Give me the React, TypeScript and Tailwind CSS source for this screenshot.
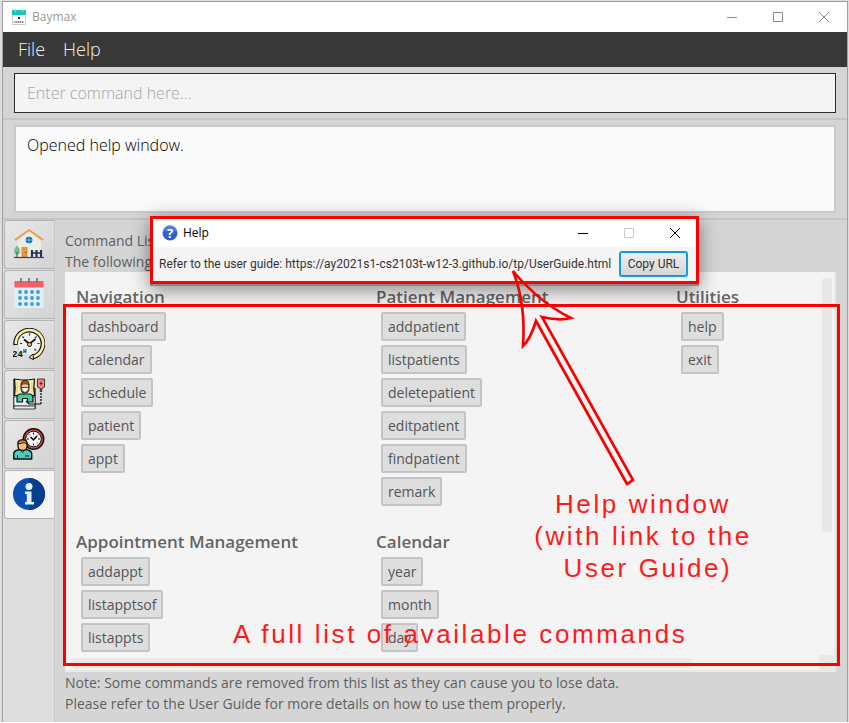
import type { ReactNode } from "react";

type Group = { title: string; commands: string[] };

const GROUPS: Group[] = [
  { title: "Navigation", commands: ["dashboard", "calendar", "schedule", "patient", "appt"] },
  {
    title: "Patient Management",
    commands: ["addpatient", "listpatients", "deletepatient", "editpatient", "findpatient", "remark"],
  },
  { title: "Utilities", commands: ["help", "exit"] },
  { title: "Appointment Management", commands: ["addappt", "listapptsof", "listappts"] },
  { title: "Calendar", commands: ["year", "month", "day"] },
];

function AppIcon() {
  return (
    <svg width="14" height="16" viewBox="0 0 14 16" aria-hidden="true">
      <rect x="0.5" y="2" width="13" height="13.5" fill="#fff" stroke="#ccc" />
      <path d="M0 1h14v5H0z" fill="#14c4b4" />
      <path d="M3.500 0v3M10.500 0v3" stroke="#8de4dc" strokeWidth="1.500" />
      <path d="M6 8h2v2H6z" fill="#333" />
      <path d="M2 13h10" stroke="#222" strokeWidth="1.200" strokeDasharray="1.500 0.500" />
    </svg>
  );
}

function HomeIcon() {
  return (
    <svg width="32" height="32" viewBox="0 0 32 32" aria-hidden="true">
      <path d="M5 13 16 3.500 28 13v16H5z" fill="#ebebe8" />
      <path d="M2 12 16 2l14 10" fill="none" stroke="#f09a3e" strokeWidth="1.800" />
      <circle cx="16" cy="12" r="3.300" fill="#1b5f8c" />
      <path d="M16 8.700v6.600M12.700 12h6.600" stroke="#35b5f0" strokeWidth="1.300" />
      <path d="M4 17.500c2.600 2.500 3.400 5 2.600 7.500-.8 2-4.400 2-5.200 0C.7 22.500 1.600 19.600 4 17.500z" fill="#6cc083" />
      <path d="M4 24v5" stroke="#3c7a52" strokeWidth="1.200" />
      <path d="M8.500 19h6v10h-6z" fill="#e8943c" />
      <circle cx="13" cy="24.500" r="0.700" fill="#7a4a10" />
      <path d="M19 22v7M23.500 22v7M28 22v7" stroke="#2b3358" strokeWidth="2.200" />
      <path d="M18 25h11" stroke="#2b3358" strokeWidth="1.600" />
      <path d="M1 29.500h30" stroke="#3b4269" strokeWidth="1.200" />
    </svg>
  );
}

function CalendarIcon() {
  const columns = [7, 13, 19, 25];
  const rows = [14, 20, 26];
  return (
    <svg width="32" height="32" viewBox="0 0 32 32" aria-hidden="true">
      <path d="M1.500 8h29v22h-29z" fill="#dff0f8" />
      <path d="M1.500 3h29v6.500h-29z" fill="#f95f5c" />
      <path d="M8 0v5M16 0v5M24 0v5" stroke="#757b85" strokeWidth="1.800" />
      {rows.map((y) => columns.map((x) => <circle key={`${x}-${y}`} cx={x} cy={y} r="1.900" fill="#3b9be0" />))}
    </svg>
  );
}

function DayClockIcon() {
  return (
    <svg width="32" height="32" viewBox="0 0 32 32" aria-hidden="true">
      <circle cx="16.500" cy="15.500" r="11" fill="#f0f0ee" />
      <path d="M2.600 17a13.700 13.700 0 1 1 16 12.300" fill="none" stroke="#111" strokeWidth="4.600" />
      <path d="M2.800 16a13.700 13.700 0 1 1 16 13.200" fill="none" stroke="#f6efa6" strokeWidth="2.600" />
      <path d="m20 26-4 3.500 4.500 2z" fill="#f6efa6" stroke="#111" />
      <path d="M16.500 5.500v2M7 15.500h2M24.500 15.500h2M9.500 8.500l1.500 1.500M23.500 8.500 22 10M23 22.500l-1.500-1.500" stroke="#222" strokeWidth="1.100" />
      <path d="m11 11.500 5.500 4.500L22.500 11" fill="none" stroke="#111" strokeWidth="1.700" />
      <circle cx="16.500" cy="16.500" r="2" fill="#efb27c" stroke="#111" />
      <text x="-1" y="28.500" fontSize="9" fontWeight="700" fontFamily="Liberation Mono, monospace" fill="#111">24</text>
      <text x="10" y="25" fontSize="6" fontWeight="700" fontFamily="Liberation Mono, monospace" fill="#111">H</text>
    </svg>
  );
}

function PatientIcon() {
  return (
    <svg width="32" height="32" viewBox="0 0 32 32" aria-hidden="true" strokeLinejoin="round">
      <path d="M1 1v30M22 10v21" stroke="#111" strokeWidth="1.300" />
      <path d="M1 19h21v9H1z" fill="#e8edf6" stroke="#333" strokeWidth="0.600" />
      <path d="M1 28h21v3H1z" fill="#e4e9f2" stroke="#222" strokeWidth="0.800" />
      <path d="M1.500 1q10 2 20 0l-.7 9 .7 7.500h-20l.7-7.500z" fill="#f9efaa" stroke="#111" strokeWidth="1.200" />
      <path d="M4 4v10M19 4v10" stroke="#d9bf62" strokeWidth="0.800" />
      <path d="M8 8q0-5.500 4-5.500T16 8v2q0 5-4 5t-4-5z" fill="#f6bd92" stroke="#111" strokeWidth="1.100" />
      <path d="M8 6.500Q8.500 2.500 12 2.500t4 4q-4-1.500-8 0z" fill="#c5562a" stroke="#111" strokeWidth="0.600" />
      <path d="M8.300 9.500h7.400q0 4.500-3.700 5-3.700-.5-3.700-5z" fill="#f3f3f3" stroke="#111" strokeWidth="0.700" />
      <path d="M4 24v-4q0-4 4-4h8q4 0 4 4v4h-5.500v-3.500h-5V24z" fill="#3ed0ac" stroke="#111" strokeWidth="1.200" />
      <path d="M24.500 1h7v8L28 11l-3.500-2z" fill="#f58a78" stroke="#111" strokeWidth="0.800" />
      <path d="M28 3.500v4M26.500 5.500h3" stroke="#7a1515" />
      <path d="M28 11v3" stroke="#6a3030" strokeWidth="2.500" />
      <path d="M28 15v11" stroke="#111" strokeWidth="1.300" strokeDasharray="2 1" />
      <path d="M28 26H16l-3-3" fill="none" stroke="#111" strokeWidth="1.200" />
    </svg>
  );
}

function AppointmentIcon() {
  return (
    <svg width="32" height="32" viewBox="0 0 32 32" aria-hidden="true" strokeLinejoin="round">
      <circle cx="20.500" cy="11" r="10.200" fill="#e24c4c" stroke="#111" strokeWidth="1.500" />
      <circle cx="20.500" cy="11" r="7.800" fill="#f8f8f8" stroke="#111" />
      <path d="M20.500 4.500v2M20.500 15.500v2M14 11h2M25 11h2M16 6.500l1 1M25 6.500l-1 1M25 15.500l-1-1" stroke="#111" />
      <path d="m17.500 9 3 3 3.500-4" fill="none" stroke="#111" strokeWidth="1.600" />
      <path d="M0.700 31v-5q0-3 4-4l3-1h4l3 1q4 1 4 4v5z" fill="#45cfc4" stroke="#111" strokeWidth="1.400" />
      <path d="m7 21 2.500 4 2.500-4z" fill="#fff" stroke="#111" strokeWidth="0.800" />
      <path d="M5 15q0-3 4.500-3t4.500 3v3q0 4.500-4.500 4.500T5 18z" fill="#f8c07c" stroke="#111" strokeWidth="1.300" />
      <path d="M5 16q0-4 4.500-4t4.500 4q-3-2-5-1z" fill="#e08a34" stroke="#111" strokeWidth="0.900" />
      <path d="M12 28h4M4.500 27v4" stroke="#111" />
    </svg>
  );
}

function InfoIcon() {
  return (
    <svg width="32" height="32" viewBox="0 0 32 32" aria-hidden="true">
      <circle cx="16" cy="16" r="16" fill="#0b4fb3" />
      <path d="M16 0a16 16 0 0 1 0 32z" fill="#083f8a" />
      <circle cx="16" cy="8.500" r="3.500" fill="#e3f3fc" />
      <path d="M12 13.500h6.500V24H21v2.500h-9V24h1.800v-8H12z" fill="#e3f3fc" />
    </svg>
  );
}

const TABS: { label: string; icon: ReactNode }[] = [
  { label: "Dashboard", icon: <HomeIcon /> },
  { label: "Calendar", icon: <CalendarIcon /> },
  { label: "Schedule", icon: <DayClockIcon /> },
  { label: "Patients", icon: <PatientIcon /> },
  { label: "Appointments", icon: <AppointmentIcon /> },
  { label: "Information", icon: <InfoIcon /> },
];

function WindowButtons({ muted }: { muted: boolean }) {
  const dark = muted ? "#8c8c8c" : "#000";
  const box = muted ? "#8c8c8c" : "#c8c8c8";
  return (
    <div className="flex h-full items-center">
      <button aria-label="Minimize" className="flex h-full w-[46px] items-center justify-center">
        <svg width="10" height="10" viewBox="0 0 10 10"><path d="M0 5.500h10" stroke={dark} /></svg>
      </button>
      <button aria-label="Maximize" className="flex h-full w-[46px] items-center justify-center">
        <svg width="10" height="10" viewBox="0 0 10 10"><path d="M.5.5h9v9h-9z" fill="none" stroke={box} /></svg>
      </button>
      <button aria-label="Close" className="flex h-full w-[46px] items-center justify-center">
        <svg width="10" height="10" viewBox="0 0 10 10"><path d="m0 0 10 10M10 0 0 10" stroke={dark} /></svg>
      </button>
    </div>
  );
}

function CommandGroup({ title, commands }: Group) {
  return (
    <section>
      <h2 className="text-[17px] font-semibold leading-6 whitespace-nowrap text-[#646464]">{title}</h2>
      <ul className="mt-[3px] flex flex-col items-start gap-1 pl-[5px]">
        {commands.map((name) => (
          <li
            key={name}
            className="rounded-xs border-2 border-[#c4c4c4] bg-[#dedede] px-[5px] text-[14px] leading-[25px] text-[#555]"
          >
            {name}
          </li>
        ))}
      </ul>
    </section>
  );
}

function HelpDialog() {
  return (
    <div
      role="dialog"
      aria-label="Help"
      className="absolute top-[216px] left-[150px] w-[549px] border-b-2 border-[#888] shadow-[0_4px_18px_rgba(0,0,0,0.45)]"
    >
      <div className="border-[3px] border-[#fb0000] bg-[#f4f4f4]">
        <div className="flex h-7 items-center bg-white pl-[9px]">
          <svg width="16" height="16" viewBox="0 0 16 16" aria-hidden="true">
            <circle cx="8" cy="8" r="7.500" fill="#2f62cf" />
            <path d="M1 7a7 7 0 0 1 14 0q-7-3-14 0z" fill="#6d9bea" opacity="0.5" />
            <text x="8" y="12.500" textAnchor="middle" fontSize="13" fontWeight="700" fontFamily="Open Sans, sans-serif" fill="#fff">?</text>
          </svg>
          <span className="ml-[5px] flex-1 text-[12px] leading-[18px] text-black">Help</span>
          <div className="-mr-0.5 h-full">
            <WindowButtons muted={false} />
          </div>
        </div>
        <div className="flex h-[34px] items-center justify-between pr-2 pl-1.5 font-['Roboto','Open_Sans',sans-serif] text-[12px] text-[#333]">
          <span className="whitespace-nowrap">
            Refer to the user guide: https://ay2021s1-cs2103t-w12-3.github.io/tp/UserGuide.html
          </span>
          <button className="h-[26px] w-[69px] rounded-[3px] border-2 border-[#0f9fd3] bg-linear-to-b from-[#eeeeee] to-[#d6d6d6] whitespace-nowrap">
            Copy URL
          </button>
        </div>
      </div>
    </div>
  );
}

function Annotations() {
  return (
    <>
      <div className="pointer-events-none absolute top-[304px] left-[63px] h-[362px] w-[777px] border-[3px] border-[#fb0000]" />
      <svg
        className="pointer-events-none absolute top-[260px] left-[500px]"
        width="150"
        height="240"
        viewBox="500 260 150 240"
        aria-hidden="true"
      >
        <path
          d="M513 271Q540 303 571 318Q560 321 542 317L633 480L627 484L536 321Q530 340 523 346Q526 304 513 271Z"
          fill="none"
          stroke="#fb0000"
          strokeWidth="2.700"
        />
      </svg>
      <p className="pointer-events-none absolute top-[488px] left-[512px] w-[262px] text-center font-['Liberation_Sans',Arial,sans-serif] text-[26px] leading-8 tracking-widest text-[#ff1a1a]">
        Help window
        <br />
        (with link to the
        <br />
        &nbsp;User Guide)
      </p>
      <p className="pointer-events-none absolute top-[618px] left-[233px] font-['Liberation_Sans',Arial,sans-serif] text-[26px] leading-8 tracking-widest whitespace-nowrap text-[#ff1a1a]">
        A full list of available commands
      </p>
    </>
  );
}

export default function App() {
  return (
    <div className="relative flex min-h-screen w-full flex-col border-b border-white bg-[#dedede] pt-px pr-px pl-0.5 font-['Open_Sans','Noto_Sans',sans-serif]">
      <div className="flex flex-1 flex-col border border-b-0 border-[#a0a0a0] bg-[#d5d5d5]">
        <header className="flex h-[30px] items-center bg-white pl-[9px]">
          <AppIcon />
          <h1 className="ml-1.5 flex-1 text-[12px] text-[#999]">Baymax</h1>
          <WindowButtons muted />
        </header>
        <nav className="flex h-[35px] items-center gap-[18px] bg-[#383838] px-[15px] text-[18px] font-light text-[#f0f0f0]">
          <button>File</button>
          <button>Help</button>
        </nav>
        <div className="border-b-2 border-[#c5c5c5] px-[11px] pt-1.5 pb-[5px]">
          <input
            aria-label="Command"
            placeholder="Enter command here..."
            className="block h-10 w-full border border-[#2a2a2a] bg-[#f4f4f4] px-3 text-[16px] font-light outline-none placeholder:text-[#a5a5a5]"
          />
        </div>
        <div className="border-b-2 border-[#c5c5c5] px-[11px] py-[5px]">
          <textarea
            aria-label="Result"
            readOnly
            value="Opened help window."
            className="block h-[88px] w-full resize-none border-2 border-[#cacaca] bg-[#fafafa] px-[11px] py-1.5 text-[16px] leading-6 font-light text-black outline-none"
          />
        </div>
        <div className="flex flex-1">
          <div role="tablist" className="flex w-[52px] flex-col gap-px border-r border-[#c8c8c8] bg-[#dedede] pl-px">
            {TABS.map((tab, index) => (
              <button
                key={tab.label}
                role="tab"
                aria-label={tab.label}
                aria-selected={index === 5}
                className={`flex h-[49px] items-center justify-center rounded-l-[3px] border-y border-l border-[#b4b4b4] pr-px pb-px ${
                  index === 5 ? "bg-[#f4f4f4]" : "bg-linear-to-br from-[#e8e8e8] to-[#d3d3d3]"
                }`}
              >
                {tab.icon}
              </button>
            ))}
          </div>
          <main className="flex min-w-0 flex-1 flex-col pt-2.5 pr-[11px] pb-2 pl-2.5 text-[14px] leading-[21px] font-medium text-[#5f5f5f]">
            <p>Command List</p>
            <p>The following</p>
            <div className="flex flex-1 flex-col border-r-2 border-b-2 border-[#eaeaea] bg-[#f4f4f4]">
              <div className="flex flex-1">
                <div className="grid flex-1 grid-cols-[300px_300px_1fr] content-start gap-y-6 pt-[13px] pl-[11px] font-normal">
                  {GROUPS.map((group) => (
                    <CommandGroup key={group.title} {...group} />
                  ))}
                </div>
                <div className="w-[15px] pt-1.5 pl-[3px]">
                  <div className="h-[254px] w-2.5 rounded-[3px] bg-[#e8e8e8]" />
                </div>
              </div>
              <div className="flex h-[15px] items-center justify-between pl-1.5">
                <div className="h-2.5 w-[621px] rounded-[3px] bg-[#e8e8e8]" />
                <div className="size-[15px] bg-[#e8e8e8]" />
              </div>
            </div>
            <p>Note: Some commands are removed from this list as they can cause you to lose data.</p>
            <p>Please refer to the User Guide for more details on how to use them properly.</p>
          </main>
        </div>
      </div>
      <HelpDialog />
      <Annotations />
    </div>
  );
}
